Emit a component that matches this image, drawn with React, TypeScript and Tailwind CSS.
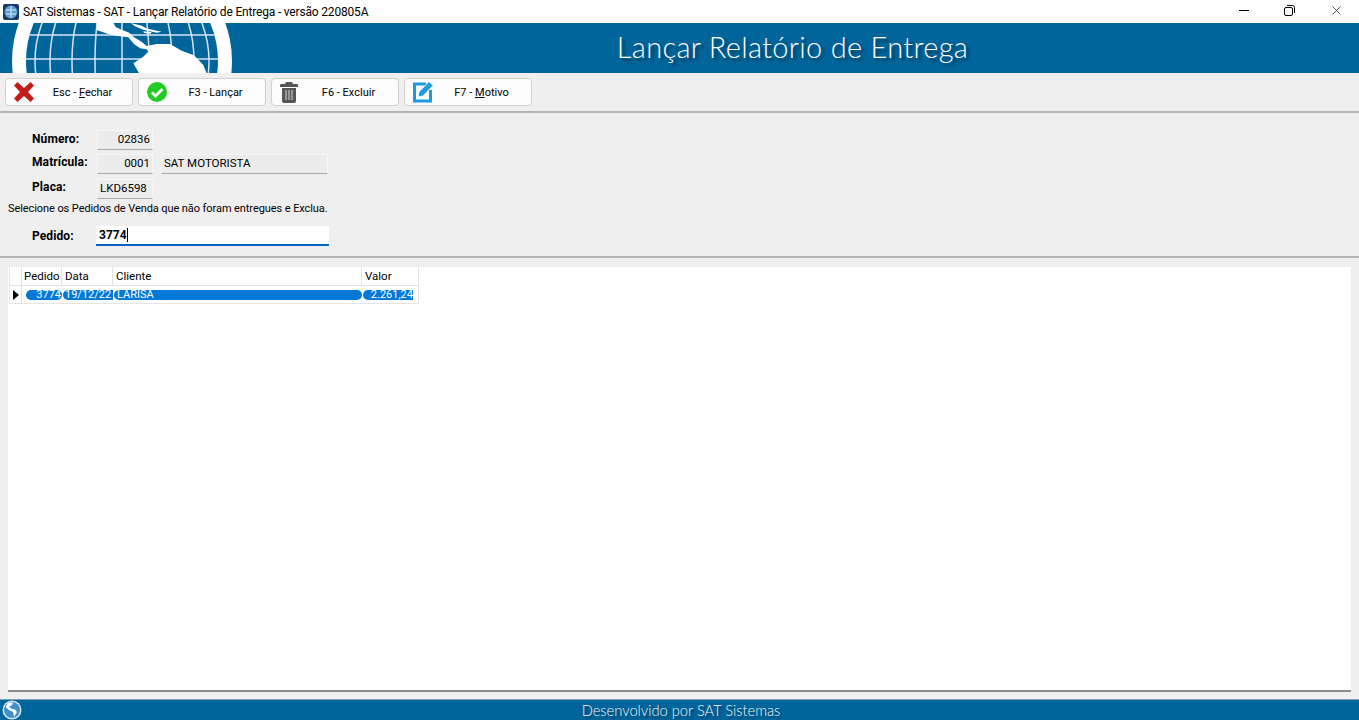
import type { ReactNode } from "react"
import { X } from "lucide-react"

const ui = { fontFamily: 'Roboto, "Liberation Sans", sans-serif' }
const thin = { fontFamily: 'Lato, "Open Sans", sans-serif' }

function Globe() {
  return (
    <svg width="240" height="50" viewBox="0 0 240 50" className="absolute left-0 top-0">
      <circle cx="122" cy="38" r="110" fill="#fff" />
      <circle cx="122" cy="38" r="96" fill="#00659a" />
      <g fill="none" stroke="#d5e4f4" strokeWidth="1.5">
        <ellipse cx="122" cy="38" rx="87" ry="96" />
        <ellipse cx="122" cy="38" rx="72" ry="96" />
        <ellipse cx="122" cy="38" rx="50" ry="96" />
        <ellipse cx="122" cy="38" rx="27" ry="96" />
        <line x1="122" y1="0" x2="122" y2="50" />
        <line x1="30" y1="12" x2="214" y2="12" />
        <line x1="26" y1="36" x2="218" y2="36" />
      </g>
      {/* land, in the 3x coordinates it was measured in */}
      <g transform="translate(0,-3) scale(0.3333)" fill="#fff">
        <path d="M290 0 L335 0 L348 22 L372 32 L388 38 L402 52 L425 65 L440 78 L470 72 L510 72 L545 92 L582 106 L610 135 L622 165 L420 165 L400 130 L428 112 L445 95 L440 88 L420 85 L402 72 L385 52 L355 48 L325 42 L290 30 Z" />
        <path d="M392 9 L425 17 L442 26 L485 35 L470 38 L430 29 L405 19 Z" />
        <path d="M430 34 L455 36 L452 41 L432 39 Z" />
      </g>
    </svg>
  )
}

function SmallGlobe() {
  return (
    <svg width="20" height="20" viewBox="0 0 20 20" className="absolute left-[2px] top-0">
      <circle cx="10" cy="10" r="9.5" fill="#dfe8ee" />
      <circle cx="10" cy="10" r="8" fill="#3f8fc8" />
      <path d="M6 3 L11 2.5 L10 5 L7 7 L10 9 L13 9.5 L15 12 L12 17 L11 12 L7 10 L3.5 7 Z" fill="#fff" />
    </svg>
  )
}

function Btn({ w, icon, children }: { w: string; icon: ReactNode; children: ReactNode }) {
  return (
    <div className={`${w} h-[28px] flex items-center rounded-[4px] border border-[#d0d0d0] bg-[#fdfdfd] pl-[6px] text-[11px] text-black`}>
      <span className="w-[24px] h-[24px] flex items-center justify-center shrink-0">{icon}</span>
      <span className="flex-1 text-center pl-[3px] pr-[6px] pt-[3px]">{children}</span>
    </div>
  )
}

function ReadBox({ w, right, children }: { w: string; right?: boolean; children: ReactNode }) {
  return (
    <div className={`${w} h-[20px] bg-[#ececec] border border-[#f6f6f6] border-b-[#a8a8a8] px-[2px] flex items-center text-[11.5px] text-black ${right ? "justify-end" : ""}`}>
      {children}
    </div>
  )
}

export default function App() {
  return (
    <div className="w-[1359px] h-[720px] flex flex-col overflow-hidden bg-[#efefef]" style={ui}>
      {/* window title */}
      <div className="h-[23px] bg-white flex items-center shrink-0">
        <svg width="16" height="16" viewBox="0 0 16 16" className="ml-[3px]">
          <rect width="16" height="16" rx="2" fill="#173a66" />
          <circle cx="8" cy="8" r="6.5" fill="#5f9fd0" />
          <path d="M3 6h10M3 10h10M8 2v12" stroke="#d8ecf8" strokeWidth="1" />
        </svg>
        <span className="ml-[4px] text-[12px] tracking-[-0.18px] text-black">SAT Sistemas - SAT - Lançar Relatório de Entrega - versão 220805A</span>
        <div className="ml-auto flex items-center text-black">
          <span className="w-[46px] flex justify-center pb-[3px]">
            <span className="block w-[10px] h-px bg-black" />
          </span>
          <span className="w-[46px] flex justify-center pb-[3px] pr-[2px]">
            <svg width="11" height="11" viewBox="0 0 11 11" fill="none" stroke="#000">
              <rect x="0.5" y="2.5" width="8" height="8" rx="1.5" />
              <path d="M3 .5h5.5a2 2 0 0 1 2 2V8" />
            </svg>
          </span>
          <span className="w-[46px] flex justify-center pb-[3px]"><X size={15} strokeWidth={1} /></span>
        </div>
      </div>

      {/* header */}
      <div className="h-[50px] shrink-0 bg-[#00659a] relative flex items-center justify-center overflow-hidden">
        <Globe />
        <span className="pl-[226px] pb-[2px] text-[29px] font-light tracking-[0.3px] text-white [text-shadow:3px_3px_3px_#003a5c]" style={thin}>
          Lançar Relatório de Entrega
        </span>
      </div>

      {/* toolbar */}
      <div className="h-[40px] shrink-0 flex items-center gap-[5px] pl-[5px] pb-[1px] border-b-2 border-[#b4b4b4]">
        <Btn w="w-[128px]" icon={
          <svg width="22" height="22" viewBox="0 0 22 22"><path d="M4.5 1 L11 7 L17.5 1 L21 4.5 L15 11 L21 17.5 L17.5 21 L11 15 L4.5 21 L1 17.5 L7 11 L1 4.5 Z" fill="#c51a1a" /></svg>
        }>Esc - <u>F</u>echar</Btn>
        <Btn w="w-[128px]" icon={
          <svg width="22" height="22" viewBox="0 0 22 22"><circle cx="11" cy="11" r="10" fill="#22cc22" /><path d="M6 11.5l3.5 3.5L16.5 8" fill="none" stroke="#fff" strokeWidth="2.8" /></svg>
        }>F3 - Lançar</Btn>
        <Btn w="w-[128px]" icon={
          <svg width="20" height="22" viewBox="0 0 20 22" className="-ml-[3px]"><path d="M7 1h6l1 2h4a1 1 0 0 1 1 1v2H1V4a1 1 0 0 1 1-1h4z" fill="#555" /><path d="M3 7h14v13a2 2 0 0 1-2 2H5a2 2 0 0 1-2-2z" fill="#555" /><path d="M7 9v10M10 9v10M13 9v10" stroke="#c4c4c4" strokeWidth="1.2" /></svg>
        }>F6 - Excluir</Btn>
        <Btn w="w-[128px]" icon={
          <svg width="22" height="23" viewBox="0 0 22 23"><path d="M14 4H2.5v17h16V10" fill="none" stroke="#1c9be0" strokeWidth="3" /><path d="M7 12L17 1.5l4 4L11 16l-5 1z" fill="#1c9be0" stroke="#fff" strokeWidth="0.8" /></svg>
        }>F7 - <u>M</u>otivo</Btn>
      </div>

      {/* form */}
      <div className="h-[145px] shrink-0 border-b-2 border-[#b4b4b4] flex flex-col text-[12px] text-black">
        <div className="mt-[17px] pl-[32px] flex items-center h-[20px]">
          <span className="w-[65px] font-bold tracking-[0.1px] pb-[2px]">Número:</span>
          <ReadBox w="w-[56px]" right>02836</ReadBox>
        </div>
        <div className="mt-[4px] pl-[32px] flex items-center h-[20px]">
          <span className="w-[65px] font-bold tracking-[0.1px] pb-[4px]">Matrícula:</span>
          <ReadBox w="w-[56px]" right>0001</ReadBox>
          <div className="ml-[8px]"><ReadBox w="w-[167px]">SAT MOTORISTA</ReadBox></div>
        </div>
        <div className="mt-[5px] pl-[32px] flex items-center h-[20px]">
          <span className="w-[65px] font-bold tracking-[0.1px] pb-[4px]">Placa:</span>
          <ReadBox w="w-[56px]">LKD6598</ReadBox>
        </div>
        <div className="pl-[8px] h-[20px] flex items-center text-[11px] tracking-[-0.08px]">Selecione os Pedidos de Venda que não foram entregues e Exclua.</div>
        <div className="pl-[32px] mt-[7px] flex items-center">
          <span className="w-[64px] font-bold tracking-[0.1px]">Pedido:</span>
          <div className="w-[233px] h-[20px] bg-white border-b-2 border-[#0067c0] flex items-center px-[3px] font-bold text-[12px]">
            3774<span className="w-px h-[14px] bg-black" />
          </div>
        </div>
      </div>

      {/* grid */}
      <div className="flex-1 min-h-0 mx-[8px] mt-[9px] mb-[7px] bg-white border-b-2 border-[#8a8a8a] text-[11.5px] text-black">
        <div className="w-[410px] ml-[1px] border border-t-0 border-[#e4e4e4]">
          <div className="flex h-[19px] border-b border-[#e4e4e4] items-center">
            <div className="w-[12px] h-full border-r border-[#e4e4e4]" />
            <div className="w-[40px] h-full pl-[2px] pt-px border-r border-[#e4e4e4]">Pedido</div>
            <div className="w-[51px] h-full pl-[3px] pt-px border-r border-[#e4e4e4]">Data</div>
            <div className="w-[249px] h-full pl-[3px] pt-px border-r border-[#e4e4e4]">Cliente</div>
            <div className="w-[56px] h-full pl-[3px] pt-px">Valor</div>
          </div>
          <div className="flex h-[17px] items-center">
            <div className="w-[12px] flex justify-center border-r border-[#e4e4e4] h-full items-center">
              <svg width="6" height="10" viewBox="0 0 6 10"><path d="M0 0l6 5-6 5z" fill="#000" /></svg>
            </div>
            <div className="flex h-[10px] items-center text-white text-[11px] leading-[10px] whitespace-nowrap">
              <div className="w-[36px] ml-[4px] h-full bg-[#0078d7] rounded-full text-right pr-[1px] overflow-hidden">3774</div>
              <div className="w-[50px] ml-[1px] h-full bg-[#0078d7] rounded-l-full pl-[2px] overflow-hidden">19/12/22</div>
              <div className="w-[248px] ml-[1px] h-full bg-[#0078d7] rounded-full pl-[3px] overflow-hidden">LARISA</div>
              <div className="w-[50px] ml-[1px] h-full bg-[#0078d7] rounded-l-full text-right overflow-hidden">2.261,24</div>
            </div>
          </div>
        </div>
      </div>

      {/* footer */}
      <div className="h-[21px] shrink-0 bg-[#00659a] relative flex items-center justify-center border-t border-[#7f9fb0]">
        <SmallGlobe />
        <span className="pl-[3px] text-[14.7px] font-light text-[#eef6fa] [text-shadow:2px_2px_2px_#003a5c]" style={thin}>Desenvolvido por SAT Sistemas</span>
      </div>
    </div>
  )
}
